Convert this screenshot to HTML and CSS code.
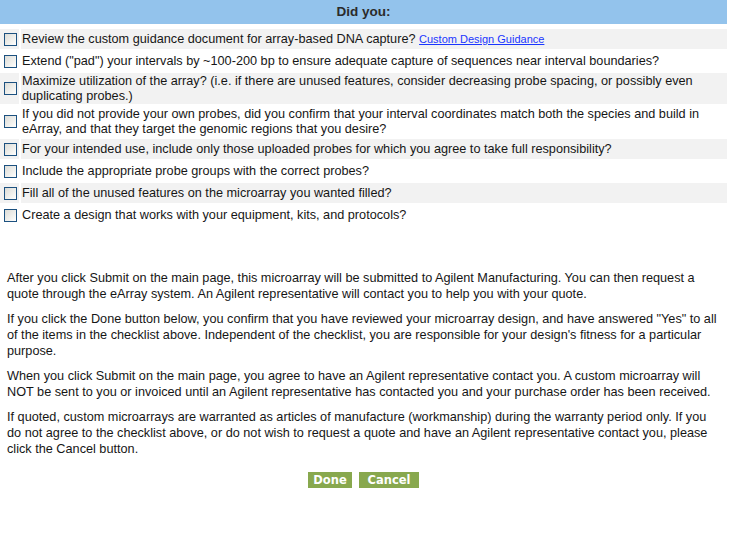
FILE: index.html
```html
<!DOCTYPE html>
<html lang="en">
<head>
    <meta charset="UTF-8">
    <title>Did you</title>
    <link rel="stylesheet" href="styles.css">
</head>
<body>
    <div class="page">
        <div class="checklist-header">Did you:</div>
        <div class="checklist">
            <div class="check-row alt">
                <div class="check-cell"><input type="checkbox"></div>
                <div class="check-text"><span>Review the custom guidance document for array-based DNA capture? <a href="#" class="guide-link">Custom Design Guidance</a></span></div>
            </div>
            <div class="check-row">
                <div class="check-cell"><input type="checkbox"></div>
                <div class="check-text"><span>Extend ("pad") your intervals by ~100-200 bp to ensure adequate capture of sequences near interval boundaries?</span></div>
            </div>
            <div class="check-row alt">
                <div class="check-cell"><input type="checkbox"></div>
                <div class="check-text"><span>Maximize utilization of the array? (i.e. if there are unused features, consider decreasing probe spacing, or possibly even duplicating probes.)</span></div>
            </div>
            <div class="check-row">
                <div class="check-cell"><input type="checkbox"></div>
                <div class="check-text"><span>If you did not provide your own probes, did you confirm that your interval coordinates match both the species and build in eArray, and that they target the genomic regions that you desire?</span></div>
            </div>
            <div class="check-row alt">
                <div class="check-cell"><input type="checkbox"></div>
                <div class="check-text"><span>For your intended use, include only those uploaded probes for which you agree to take full responsibility?</span></div>
            </div>
            <div class="check-row">
                <div class="check-cell"><input type="checkbox"></div>
                <div class="check-text"><span>Include the appropriate probe groups with the correct probes?</span></div>
            </div>
            <div class="check-row alt">
                <div class="check-cell"><input type="checkbox"></div>
                <div class="check-text"><span>Fill all of the unused features on the microarray you wanted filled?</span></div>
            </div>
            <div class="check-row">
                <div class="check-cell"><input type="checkbox"></div>
                <div class="check-text"><span>Create a design that works with your equipment, kits, and protocols?</span></div>
            </div>
        </div>

        <div class="notes">
            <p>After you click Submit on the main page, this microarray will be submitted to Agilent Manufacturing. You can then request a quote through the eArray system. An Agilent representative will contact you to help you with your quote.</p>
            <p>If you click the Done button below, you confirm that you have reviewed your microarray design, and have answered "Yes" to all of the items in the checklist above. Independent of the checklist, you are responsible for your design's fitness for a particular purpose.</p>
            <p>When you click Submit on the main page, you agree to have an Agilent representative contact you. A custom microarray will NOT be sent to you or invoiced until an Agilent representative has contacted you and your purchase order has been received.</p>
            <p>If quoted, custom microarrays are warranted as articles of manufacture (workmanship) during the warranty period only. If you do not agree to the checklist above, or do not wish to request a quote and have an Agilent representative contact you, please click the Cancel button.</p>
        </div>

        <div class="actions">
            <button type="button" class="btn btn-done">Done</button>
            <button type="button" class="btn btn-cancel">Cancel</button>
        </div>
    </div>
</body>
</html>
```

FILE: styles.css
```css
* {
    margin: 0;
    padding: 0;
    box-sizing: border-box;
}

body {
    background-color: #ffffff;
    color: #161616;
    font-family: 'Liberation Sans', Arial, sans-serif;
    font-size: 12.7px;
}

.page {
    width: 727px;
}

.checklist-header {
    height: 24px;
    line-height: 24px;
    background-color: #93c3ec;
    color: #2b2b2b;
    font-size: 13.5px;
    font-weight: bold;
    text-align: center;
}

.checklist {
    margin-top: 5px;
    display: flex;
    flex-direction: column;
    gap: 2px;
}

.check-row {
    display: grid;
    grid-template-columns: 19px 1fr;
    column-gap: 2px;
    min-height: 20px;
}

.check-row.alt .check-cell,
.check-row.alt .check-text {
    background-color: #f2f2f2;
}

.check-cell {
    display: flex;
    align-items: center;
}

.check-cell input {
    appearance: none;
    -webkit-appearance: none;
    width: 13px;
    height: 13px;
    margin-left: 4px;
    border: 1px solid #1c5180;
    background: linear-gradient(135deg, #dcdcd7 0%, #f4f4f1 70%, #ffffff 100%);
}

.check-text {
    display: flex;
    align-items: center;
    padding: 1px 2px 0 1px;
    line-height: 15px;
}

.guide-link {
    color: #1a36ff;
    font-size: 11px;
    text-decoration: underline;
}

.notes {
    margin-top: 45px;
    padding: 0 7px;
}

.notes p {
    line-height: 16px;
    margin-bottom: 9px;
}

.notes p:last-child {
    margin-bottom: 0;
}

.actions {
    margin-top: 15px;
    display: flex;
    justify-content: center;
    gap: 7px;
}

.btn {
    background-color: #88a84e;
    color: #ffffff;
    border: none;
    font-family: 'DejaVu Sans', Verdana, sans-serif;
    font-size: 11.5px;
    font-weight: bold;
    height: 16px;
    padding: 0;
    cursor: pointer;
}

.btn-done {
    width: 44px;
}

.btn-cancel {
    width: 60px;
}
```
